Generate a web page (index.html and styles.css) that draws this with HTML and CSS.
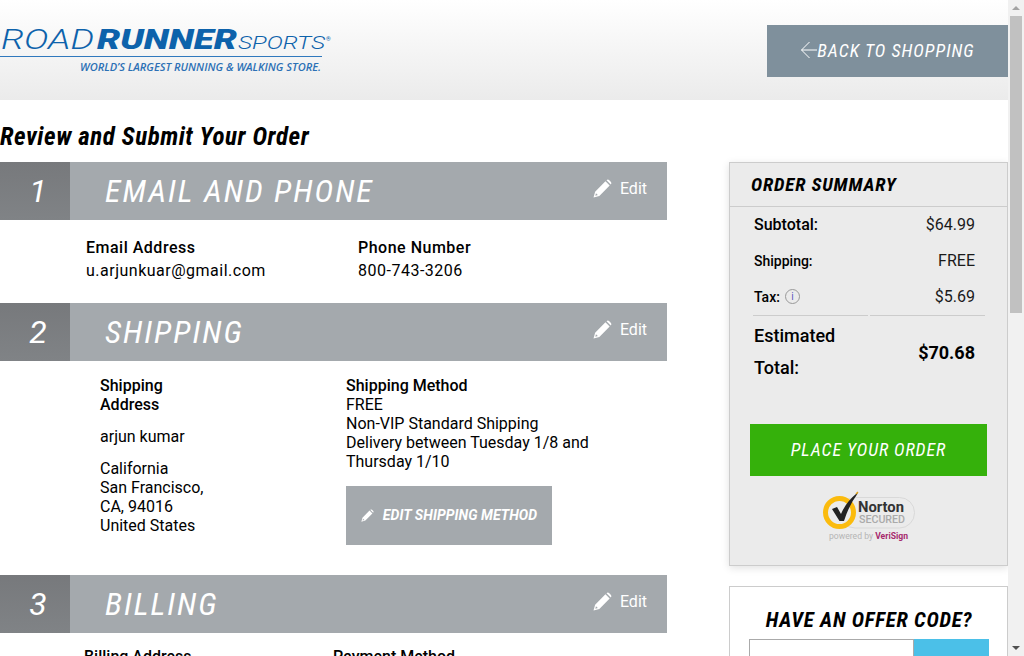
FILE: index.html
```html
<!DOCTYPE html>
<html lang="en">
<head>
<meta charset="utf-8">
<title>Review and Submit Your Order</title>
<link rel="stylesheet" href="styles.css">
</head>
<body>
<svg class="defs" width="0" height="0" aria-hidden="true"><defs>
<symbol id="pencil" viewBox="0 0 18 18"><path fill-rule="evenodd" d="M0.5 17.5 L2 12 L11.8 2.2 L15.8 6.2 L6 16 Z M2.2 15.8 L4.6 15.2 L2.8 13.4 Z"/><path d="M12.8 1.2 Q14 0 15.2 1 L17 2.8 Q18 4 16.8 5.2 Z"/></symbol>
</defs></svg>
<div class="page">
<header class="top">
  <div class="logo">
    <svg width="332" height="76" viewBox="0 0 332 76" role="img" aria-label="Road Runner Sports">
      <text class="l-road" x="1" y="49" textLength="93" lengthAdjust="spacingAndGlyphs">ROAD</text>
      <text class="l-runner" x="97" y="49" textLength="140" lengthAdjust="spacingAndGlyphs">RUNNER</text>
      <text class="l-sports" x="238" y="49" textLength="87" lengthAdjust="spacingAndGlyphs">SPORTS</text>
      <text class="l-reg" x="326" y="41">®</text>
      <rect x="0" y="56" width="322" height="1" fill="#2f78bd"/>
      <text class="l-tag" x="80" y="71" textLength="241" lengthAdjust="spacingAndGlyphs">WORLD’S LARGEST RUNNING &amp; WALKING STORE.</text>
    </svg>
  </div>
  <a class="back" href="#">
    <svg width="17" height="18" viewBox="0 0 17 18"><path d="M9.5 1 L1.5 9 L9.5 17 M1.5 9 H17" fill="none" stroke="#fff" stroke-width="1"/></svg>
    <span>BACK TO SHOPPING</span>
  </a>
</header>

<h1 class="title">Review and Submit Your Order</h1>

<div class="columns">
  <main class="main">
    <section class="step">
      <div class="bar"><div class="num">1</div><h2>EMAIL AND PHONE</h2><a class="edit" href="#"><svg class="pen"><use href="#pencil"/></svg>Edit</a></div>
      <div class="body contact">
        <div class="c1"><b>Email Address</b><p>u.arjunkuar@gmail.com</p></div>
        <div class="c2"><b>Phone Number</b><p>800-743-3206</p></div>
      </div>
    </section>
    <section class="step">
      <div class="bar"><div class="num">2</div><h2>SHIPPING</h2><a class="edit" href="#"><svg class="pen"><use href="#pencil"/></svg>Edit</a></div>
      <div class="body ship">
        <div class="addr">
          <b>Shipping<br>Address</b>
          <p>arjun kumar</p>
          <p>California<br>San Francisco,<br>CA, 94016<br>United States</p>
        </div>
        <div class="method">
          <b>Shipping Method</b>
          <div>FREE<br>Non-VIP Standard Shipping<br>Delivery between Tuesday 1/8 and Thursday 1/10</div>
          <a class="edit-method" href="#"><svg class="pen-s"><use href="#pencil"/></svg>EDIT SHIPPING METHOD</a>
        </div>
      </div>
    </section>
    <section class="step">
      <div class="bar"><div class="num">3</div><h2>BILLING</h2><a class="edit" href="#"><svg class="pen"><use href="#pencil"/></svg>Edit</a></div>
      <div class="body bill">
        <div class="b1"><b>Billing Address</b><p>arjun kumar</p></div>
        <div class="b2"><b>Payment Method</b><p>Visa</p></div>
      </div>
    </section>
  </main>

  <aside class="side">
    <div class="summary">
      <h3>ORDER SUMMARY</h3>
      <div class="lines">
        <div class="line"><b class="lg">Subtotal:</b><span>$64.99</span></div>
        <div class="line"><b>Shipping:</b><span>FREE</span></div>
        <div class="line"><b>Tax: <i class="info">i</i></b><span>$5.69</span></div>
        <div class="rules"><hr><hr></div>
        <div class="total"><b>Estimated Total:</b><strong>$70.68</strong></div>
      </div>
      <a class="place" href="#">PLACE YOUR ORDER</a>
      <div class="norton">
        <svg width="100" height="56" viewBox="0 0 100 56" role="img" aria-label="Norton Secured">
          <rect x="22" y="9.5" width="74.5" height="30.5" rx="15" fill="none" stroke="#d9d9d9" stroke-width="1"/>
          <circle cx="21.5" cy="24.5" r="14" fill="#ebebeb" stroke="#fbbb0d" stroke-width="5"/>
          <path d="M14 21 L19 19 L23 26 Q28 14 38 6 L40 5 Q31 17 26 33 L21.5 33 Z" fill="#222"/>
          <path d="M38 6 L40 4" stroke="#e0a010" stroke-width="1.5"/>
          <text class="n-name" x="40" y="24" textLength="46" lengthAdjust="spacingAndGlyphs">Norton</text>
          <text class="n-sec" x="41" y="35" textLength="46" lengthAdjust="spacingAndGlyphs">SECURED</text>
          <text class="n-pow" x="11" y="51" textLength="79" lengthAdjust="spacingAndGlyphs">powered by <tspan class="n-vs">VeriSign</tspan></text>
        </svg>
      </div>
    </div>
    <div class="offer">
      <h3>HAVE AN OFFER CODE?</h3>
      <div class="offer-row"><input class="code" type="text" aria-label="Offer code"><button class="apply">APPLY</button></div>
    </div>
  </aside>
</div>
</div>
<div class="scrollbar" aria-hidden="true">
  <div class="sb-btn"><span class="arrow-up"></span></div>
  <div class="sb-thumb"></div>
  <div class="sb-btn"><span class="arrow-down"></span></div>
</div>
</body>
</html>
```

FILE: styles.css
```css
* { box-sizing: border-box; }
html, body { margin: 0; padding: 0; }
body { display: flex; height: 100vh; overflow: hidden; font-family: Roboto, "Liberation Sans", sans-serif; color: #000; background: #fff; font-size: 16px; }
a { text-decoration: none; color: inherit; }
p { margin: 0; }
.defs { position: absolute; }
.page { width: 1008px; flex: none; }

.scrollbar { width: 16px; height: 100vh; flex: none; background: #f1f1f1; display: flex; flex-direction: column; justify-content: space-between; }
.sb-btn { height: 16px; display: flex; align-items: center; justify-content: center; }
.sb-thumb { width: 12px; height: 297px; margin: 0 2px auto; background: #c1c1c1; }
.arrow-up { border: 4px solid transparent; border-top: 0; border-bottom: 4px solid #a3a3a3; }
.arrow-down { border: 4px solid transparent; border-bottom: 0; border-top: 4px solid #505050; }

.top { height: 100px; background: linear-gradient(#fff, #ebebeb); display: flex; justify-content: space-between; align-items: flex-start; }
.logo { height: 76px; }
.l-road { font: italic 300 27px Roboto, sans-serif; fill: #0d62ab; }
.l-runner { font: italic 900 27px Roboto, sans-serif; fill: #0d62ab; }
.l-sports { font: italic 300 18px Roboto, sans-serif; fill: #0d62ab; }
.l-reg { font: 6px Roboto, sans-serif; fill: #0d62ab; }
.l-tag { font: italic 600 11px "Open Sans", sans-serif; fill: #2c70b5; }
.back { margin-top: 25px; width: 241px; height: 52px; padding-bottom: 2px; background: #7f909c; color: #fff; display: flex; align-items: center; justify-content: center; font-size: 18px; font-style: italic; letter-spacing: 1px; font-stretch: condensed; }
.back span { display: block; }

.title { margin: 0; height: 62px; padding-top: 20px; font-size: 25px; line-height: 33px; font-weight: 700; font-style: italic; letter-spacing: 0.54px; font-stretch: condensed; }

.columns { display: flex; gap: 62px; align-items: flex-start; }
.main { width: 667px; flex: none; }
.side { width: 279px; flex: none; }

.bar { height: 58px; background: #a4a9ad; color: #fff; display: flex; align-items: center; }
.num { width: 70px; height: 58px; flex: none; background: linear-gradient(#77797c, #808386); font-size: 32px; font-style: italic; font-weight: 400; display: flex; align-items: center; justify-content: center; padding-left: 6px; }
.bar h2 { margin: 0 0 0 35px; flex: 1; font-size: 32px; font-weight: 400; font-style: italic; letter-spacing: 2px; font-stretch: condensed; }
.edit { display: flex; align-items: center; gap: 8px; margin: -6px 20px 0 0; font-size: 16px; }
.pen { width: 19px; height: 19px; fill: #fff; }

.body { line-height: 19px; }
.contact { height: 83px; display: flex; padding: 16px 0 0 86px; line-height: 23px; letter-spacing: 0.5px; }
.contact b { font-weight: 500; letter-spacing: 0.5px; }
.c1 { width: 272px; }
.ship { height: 214px; display: flex; padding-top: 15px; }
.ship b { font-weight: 500; display: block; }
.addr { width: 246px; margin-left: 100px; flex: none; }
.addr p { margin-top: 13px; }
.method { width: 250px; }
.edit-method { margin-top: 15px; width: 206px; height: 59px; background: #a4a9ad; color: #fff; display: flex; align-items: center; justify-content: center; gap: 9px; font-size: 14px; font-weight: 700; font-style: italic; letter-spacing: 0.05px; }
.pen-s { width: 13px; height: 13px; fill: #fff; }
.bill { display: flex; padding: 14px 0 0 84px; }
.bill b { font-weight: 500; }
.b1 { width: 249px; }

.summary { height: 404px; background: #ebebeb; border: 1px solid #ccc; box-shadow: 0 2px 8px rgba(0,0,0,.12); }
.summary h3 { margin: 0; height: 44px; padding-left: 21px; border-bottom: 1px solid #ccc; font-size: 19px; line-height: 43px; font-weight: 700; font-style: italic; letter-spacing: 0.85px; font-stretch: condensed; }
.lines { padding: 0 32px 0 24px; }
.line { display: flex; justify-content: space-between; align-items: center; height: 35px; margin-bottom: 1px; color: #1a1a1a; }
.line b { display: flex; align-items: center; gap: 5px; font-size: 14px; font-weight: 500; color: #000; }
.line b.lg { font-size: 16px; }
.info { display: inline-block; width: 15px; height: 15px; border: 1px solid #999; border-radius: 50%; text-align: center; font: 10px/13px Roboto, sans-serif; color: #5a5ac0; }
.rules { display: flex; gap: 2px; margin: 0 -10px 0 -1px; }
.rules hr { flex: 1; margin: 0; border: 0; border-top: 1px solid #ccc; }
.total { display: flex; justify-content: space-between; align-items: center; padding-top: 4px; }
.total b { width: 110px; font-size: 18px; line-height: 32px; font-weight: 500; }
.total strong { font-size: 18px; font-weight: 700; }
.place { display: flex; align-items: center; justify-content: center; width: 237px; height: 52px; padding-bottom: 2px; margin: 40px 0 0 20px; background: #35b10b; color: #fff; font-size: 18px; font-style: italic; letter-spacing: 0.9px; font-stretch: condensed; }
.norton { margin: 12px 0 0 88px; height: 56px; }
.n-name { font: 700 15px Roboto, sans-serif; fill: #333; }
.n-sec { font: 500 10px Roboto, sans-serif; fill: #aaa; }
.n-pow { font: 8.5px Roboto, sans-serif; fill: #b5b5b5; }
.n-vs { font-weight: 700; fill: #a62a6e; }

.offer { margin-top: 20px; height: 120px; border: 1px solid #ccc; background: #fff; padding: 20px 18px 0 19px; }
.offer h3 { margin: 0 0 5px; text-align: center; font-size: 21px; line-height: 27px; font-weight: 700; font-style: italic; letter-spacing: 0.75px; font-stretch: condensed; }
.offer-row { display: flex; height: 50px; }
.code { width: 165px; height: 50px; border: 1px solid #aaa; background: #fff; }
.apply { flex: 1; border: 0; background: #4bc0e8; color: #fff; font: 700 16px Roboto, sans-serif; }
```
